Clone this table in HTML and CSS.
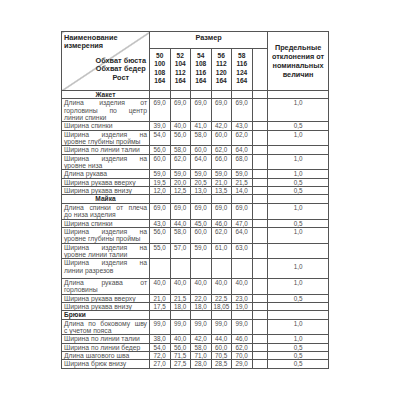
FILE: index.html
```html
<!DOCTYPE html>
<html lang="ru">
<head>
<meta charset="utf-8">
<title>Таблица размеров</title>
<link rel="stylesheet" href="styles.css">
</head>
<body>
<div class="sheet">
<table class="grid">
<colgroup>
<col class="c-name"><col class="c-size"><col class="c-size"><col class="c-size"><col class="c-size"><col class="c-size"><col class="c-blank"><col class="c-tol">
</colgroup>
<tr class="h1">
<td class="corner" rowspan="2">
<div class="corner-in">
<div class="corner-top">Наименование<br>измерения</div>
<div class="corner-bottom"><div class="corner-list">Обхват бюста<br>Обхват бедер<br>Рост</div></div>
</div>
</td>
<td class="hsize" colspan="6">Размер</td>
<td class="htol" rowspan="2">Предельные отклонения от номинальных величин</td>
</tr>
<tr class="h2">
<td class="size">50<br>100<br>108<br>164</td>
<td class="size">52<br>104<br>112<br>164</td>
<td class="size">54<br>108<br>116<br>164</td>
<td class="size">56<br>112<br>120<br>164</td>
<td class="size">58<br>116<br>124<br>164</td>
<td></td>
</tr>

<tr><td class="sec">Жакет</td><td></td><td></td><td></td><td></td><td></td><td></td><td></td></tr>
<tr><td class="name"><span class="j">Длина изделия от</span><span class="j">горловины по центр</span><span>линии спинки</span></td><td>69,0</td><td>69,0</td><td>69,0</td><td>69,0</td><td>69,0</td><td></td><td>1,0</td></tr>
<tr><td class="name">Ширина спинки</td><td>39,0</td><td>40,0</td><td>41,0</td><td>42,0</td><td>43,0</td><td></td><td>0,5</td></tr>
<tr><td class="name"><span class="j">Ширина изделия на</span><span>уровне глубины проймы</span></td><td>54,0</td><td>56,0</td><td>58,0</td><td>60,0</td><td>62,0</td><td></td><td>1,0</td></tr>
<tr><td class="name">Ширина по линии талии</td><td>56,0</td><td>58,0</td><td>60,0</td><td>62,0</td><td>64,0</td><td></td><td></td></tr>
<tr><td class="name"><span class="j">Ширина изделия на</span><span>уровне низа</span></td><td>60,0</td><td>62,0</td><td>64,0</td><td>66,0</td><td>68,0</td><td></td><td>1,0</td></tr>
<tr><td class="name">Длина рукава</td><td>59,0</td><td>59,0</td><td>59,0</td><td>59,0</td><td>59,0</td><td></td><td>1,0</td></tr>
<tr><td class="name">Ширина рукава вверху</td><td>19,5</td><td>20,0</td><td>20,5</td><td>21,0</td><td>21,5</td><td></td><td>0,5</td></tr>
<tr><td class="name">Ширина рукава внизу</td><td>12,0</td><td>12,5</td><td>13,0</td><td>13,5</td><td>14,0</td><td></td><td>0,5</td></tr>

<tr><td class="sec">Майка</td><td></td><td></td><td></td><td></td><td></td><td></td><td></td></tr>
<tr><td class="name"><span class="j">Длина спинки от плеча</span><span>до низа изделия</span></td><td>69,0</td><td>69,0</td><td>69,0</td><td>69,0</td><td>69,0</td><td></td><td>1,0</td></tr>
<tr><td class="name">Ширина спинки</td><td>43,0</td><td>44,0</td><td>45,0</td><td>46,0</td><td>47,0</td><td></td><td>0,5</td></tr>
<tr><td class="name"><span class="j">Ширина изделия на</span><span>уровне глубины проймы</span></td><td>56,0</td><td>58,0</td><td>60,0</td><td>62,0</td><td>64,0</td><td></td><td>1,0</td></tr>
<tr><td class="name"><span class="j">Ширина изделия на</span><span>уровне линии талии</span></td><td>55,0</td><td>57,0</td><td>59,0</td><td>61,0</td><td>63,0</td><td></td><td></td></tr>
<tr class="tall"><td class="name"><span class="j">Ширина изделия на</span><span>линии разрезов</span></td><td></td><td></td><td></td><td></td><td></td><td></td><td class="mid">1,0</td></tr>
<tr><td class="name"><span class="j">Длина рукава от</span><span>горловины</span></td><td>40,0</td><td>40,0</td><td>40,0</td><td>40,0</td><td>40,0</td><td></td><td>1,0</td></tr>
<tr><td class="name">Ширина рукава вверху</td><td>21,0</td><td>21,5</td><td>22,0</td><td>22,5</td><td>23,0</td><td></td><td>0,5</td></tr>
<tr><td class="name">Ширина рукава внизу</td><td>17,5</td><td>18,0</td><td>18,0</td><td>18,05</td><td>19,0</td><td></td><td></td></tr>

<tr><td class="sec left">Брюки</td><td></td><td></td><td></td><td></td><td></td><td></td><td></td></tr>
<tr><td class="name"><span class="j">Длина по боковому шву</span><span>с учетом пояса</span></td><td>99,0</td><td>99,0</td><td>99,0</td><td>99,0</td><td>99,0</td><td></td><td>1,0</td></tr>
<tr><td class="name">Ширина по линии талии</td><td>38,0</td><td>40,0</td><td>42,0</td><td>44,0</td><td>46,0</td><td></td><td>1,0</td></tr>
<tr><td class="name">Ширина по линии бедер</td><td>54,0</td><td>56,0</td><td>58,0</td><td>60,0</td><td>62,0</td><td></td><td>0,5</td></tr>
<tr><td class="name">Длина шагового шва</td><td>72,0</td><td>71,5</td><td>71,0</td><td>70,5</td><td>70,0</td><td></td><td>0,5</td></tr>
<tr><td class="name">Ширина брюк внизу</td><td>27,0</td><td>27,5</td><td>28,0</td><td>28,5</td><td>29,0</td><td></td><td>0,5</td></tr>
</table>
</div>
</body>
</html>
```
FILE: styles.css
```css
html, body {
  margin: 0;
  padding: 0;
  background: #ffffff;
}

.sheet {
  padding: 31px 0 0 61px;
}

.grid {
  border-collapse: collapse;
  table-layout: fixed;
  width: 267px;
  font-family: "Liberation Sans", Arial, sans-serif;
  color: #505050;
}

.c-name { width: 88px; }
.c-size { width: 20.5px; }
.c-blank { width: 15.5px; }
.c-tol { width: 61px; }

.grid td {
  border: 1px solid #555555;
  padding: 0 2px;
  font-size: 6.3px;
  line-height: 7.35px;
  vertical-align: top;
  text-align: center;
  white-space: nowrap;
}

.h1 td { height: 14px; }
.h2 td { height: 38px; }

.grid .corner {
  padding: 0;
  vertical-align: top;
  text-align: left;
  background: linear-gradient(to bottom right,
    transparent calc(50% - 0.6px),
    #555555 50%,
    transparent calc(50% + 0.6px));
}

.corner-in {
  display: flex;
  flex-direction: column;
  justify-content: space-between;
  height: 53px;
  padding: 2px 3px 1px 2px;
  box-sizing: border-box;
  font-weight: bold;
  font-size: 7.3px;
  line-height: 7.5px;
  color: #262626;
}

.corner-bottom {
  display: flex;
  justify-content: flex-end;
  padding-bottom: 2px;
}

.corner-list {
  text-align: center;
  line-height: 8.3px;
}

.grid .hsize {
  font-weight: bold;
  font-size: 7.3px;
  color: #262626;
  padding-top: 2px;
}

.grid .htol {
  font-weight: bold;
  font-size: 7.3px;
  line-height: 9px;
  color: #262626;
  vertical-align: middle;
  white-space: normal;
  padding: 0 3px;
}

.grid .size {
  font-weight: bold;
  font-size: 6.6px;
  line-height: 8.4px;
  color: #262626;
  padding: 3px 0 0;
}

.grid .sec {
  font-weight: bold;
  font-size: 6.6px;
  color: #262626;
  text-align: center;
}

.grid .sec.left {
  text-align: left;
}

.grid .name {
  text-align: left;
  white-space: normal;
  font-size: 6.8px;
}

.name span {
  display: block;
  white-space: nowrap;
}

.name .j {
  text-align: justify;
  text-align-last: justify;
  white-space: normal;
}

.tall td {
  padding-bottom: 4px;
}

.grid .mid {
  vertical-align: middle;
}
```
